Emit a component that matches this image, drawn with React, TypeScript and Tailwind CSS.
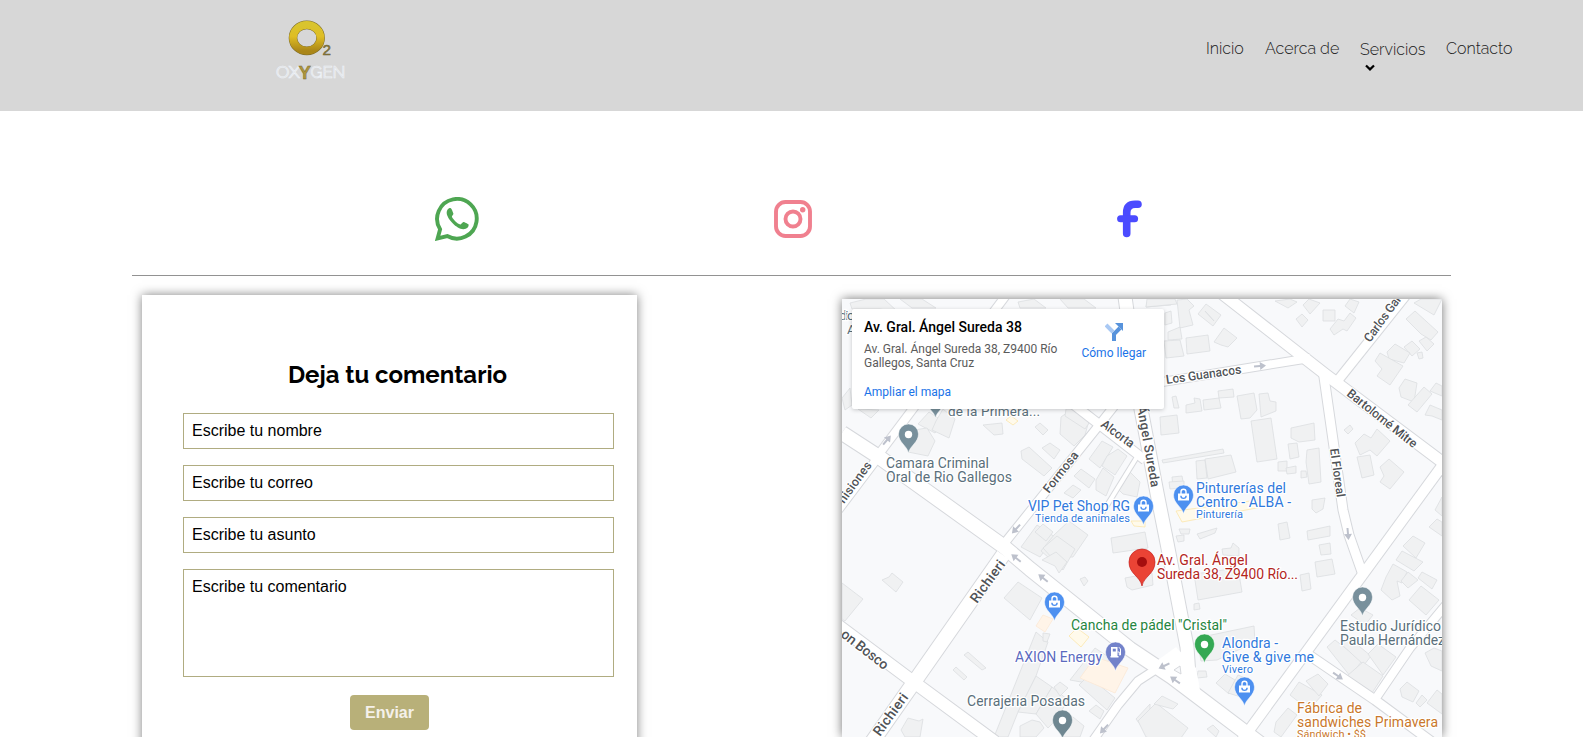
import React from "react";

const navFont = "font-['Raleway','Lato',sans-serif]";

const roads: [string, number][] = [
  ["M842 433L879 457L1003 546L1030 569L1130 649L1172 677L1262 745", 14],
  ["M870 745L917 678L1003 555", 14],
  ["M1003 545L1100 424L1130 386", 8],
  ["M1060 394L1145 460", 9],
  ["M1140 452L1098 520", 4],
  ["M1124 290L1141 409L1157 493L1167 543L1187 647L1190 690", 13],
  ["M1150 384L1310 358", 8],
  ["M1220 292L1325 374L1450 468", 11],
  ["M1410 290L1335 384", 9],
  ["M1323 370L1343 510L1349 535L1362 572", 9],
  ["M1450 455L1242 740", 10],
  ["M1306 653L1375 700L1432 742", 9],
  ["M1376 698L1410 648L1450 600", 8],
  ["M1158 668L1138 681L1118 705L1092 742", 8],
  ["M836 624L915 683L995 742", 12],
  ["M876 460L836 513", 8],
  ["M879 454L945 366", 8],
  ["M1010 290L980 330", 8],
];

const buildings = [
  // north-west edge
  "850,303 866,299 884,299 898,312 880,309 852,309", "900,299 912,308 936,308 922,299", "1018,302 1034,299 1046,308 1020,308", "1060,299 1084,299 1096,308 1068,308", "1148,299 1170,299 1171,305 1146,307",
  "842,398 850,388 852,405 845,410", "858,409 879,410 871,418", "918,424 929,412 944,422 935,433", "936,421 943,409 955,419 949,438 932,430",
  "914,430 927,428 935,441 928,456 908,452", "983,425 1002,423 1003,434 994,435", "1035,427 1040,423 1048,430 1043,435", "1061,417 1072,409 1090,417 1085,435 1074,446 1060,434",
  "1066,409 1076,409 1091,420 1085,429 1065,416", "1021,451 1029,447 1052,468 1044,476 1022,459", "1042,448 1050,443 1060,450 1054,459",
  "1089,459 1102,441 1113,447 1100,468", "1107,456 1118,449 1127,456 1115,475 1102,466", "1074,476 1081,469 1095,479 1089,488", "1096,480 1103,468 1114,477 1106,496 1096,490", "1116,487 1130,472 1140,482 1137,497 1123,494",
  "1064,493 1073,485 1081,490 1073,498", "1021,547 1037,525 1055,537 1040,557", "1035,532 1043,524 1053,532 1046,541", "1054,535 1069,521 1088,535 1073,557 1048,557 1041,551", "1043,548 1057,536 1075,549 1063,570",
  "1111,538 1145,532 1148,548 1113,553",
  // Los Guanacos
  "1147,299 1175,299 1177,304 1146,307", "1177,300 1187,299 1194,306 1189,310 1193,325 1180,328", "1198,314 1206,304 1221,315 1213,326", "1205,311 1214,321", "1165,313 1171,311 1172,323 1165,325", "1168,332 1180,327 1182,339 1168,340", "1164,341 1180,340 1184,356 1166,358",
  "1186,338 1208,335 1210,351 1187,354", "1214,342 1224,328 1237,338 1228,347 1221,345", "1172,397 1176,396 1179,408 1174,408", "1186,405 1195,403 1194,398 1200,399 1202,411 1186,413", "1203,400 1219,398 1221,408 1204,410", "1218,391 1233,389 1234,397 1219,398",
  "1237,396 1254,393 1257,410 1250,418 1241,419", "1259,394 1268,393 1270,401 1276,402 1276,411 1261,417", "1251,421 1271,418 1277,459 1257,462", "1160,417 1177,415 1179,433 1161,435",
  "1196,461 1205,460 1207,478 1197,479", "1205,459 1231,455 1236,472 1208,479", "1162,460 1223,449 1224,453 1163,463", "1291,428 1314,423 1315,440 1299,442 1291,438", "1288,444 1297,443 1299,457 1290,459", "1278,462 1287,461 1287,471 1278,471",
  "1307,450 1319,448 1321,482 1309,484 1306,462", "1301,471 1306,471 1307,477 1301,478", "1172,477 1182,476 1184,487 1173,488", "1169,482 1184,481 1184,488 1170,489", "1286,468 1296,466 1296,473 1287,474",
  "1357,457 1370,455 1374,475 1362,478", "1312,500 1325,498 1323,509 1316,513 1312,509", "1278,524 1287,522 1290,538 1280,540", "1307,531 1330,526 1330,536 1308,540", "1197,534 1217,528 1215,533 1200,539", "1179,529 1190,529 1189,534 1181,534", "1176,536 1184,535 1184,541 1178,542",
  "1315,562 1332,559 1335,574 1317,577", "1319,545 1330,543 1331,554 1321,555", "1300,575 1309,573 1311,589 1302,591", "1194,574 1238,568 1242,592 1198,600", "1222,549 1231,548 1233,543 1239,548 1239,556 1223,555", "1125,578 1152,573 1153,585 1132,590 1127,587", "1194,604 1199,603 1200,609 1194,610",
  // north-east
  "1275,301 1290,299 1297,302 1288,308", "1303,305 1309,299 1320,303 1310,314", "1296,319 1302,314 1308,320 1302,327", "1323,310 1335,310 1335,321 1323,321", "1330,329 1338,319 1344,321 1350,313 1356,318 1347,331 1343,329 1334,335", "1345,306 1350,299 1359,302 1354,313",
  "1406,319 1415,311 1438,332 1431,340 1421,334", "1404,347 1412,341 1420,349 1412,356", "1387,352 1395,344 1410,353 1404,363 1389,359", "1375,361 1380,353 1403,366 1390,385 1377,376 1382,369", "1419,341 1426,337 1434,344 1427,351", "1417,353 1422,352 1423,358 1419,359", "1414,303 1421,299 1442,299 1434,315",
  "1399,388 1405,379 1417,383 1414,402 1401,397", "1408,405 1424,387 1432,394 1417,412", "1430,391 1436,383 1442,386 1442,396", "1425,415 1430,405 1442,410 1442,420 1432,416", "1344,430 1350,425 1353,429 1348,434", "1355,443 1364,434 1371,438 1377,429 1390,441 1377,456 1370,450 1360,455",
  "1380,467 1389,459 1404,472 1390,489 1380,482 1384,476",
  // south-east
  "1435,510 1442,497 1442,516", "1429,527 1437,519 1442,522 1442,536", "1403,546 1413,536 1425,543 1416,558", "1396,560 1402,551 1423,562 1414,571", "1386,577 1393,564 1407,572 1402,583 1397,581 1400,596 1392,600 1381,590", "1401,581 1408,572 1418,580 1408,588", "1418,578 1422,572 1437,580 1432,589", "1409,600 1421,586 1439,600 1426,615", "1351,615 1360,608 1373,615 1365,625",
  "1327,647 1335,640 1362,661 1350,676", "1340,643 1348,637 1371,656 1364,665", "1347,676 1363,662 1383,676 1372,693", "1368,654 1378,644 1396,657 1383,675", "1400,689 1407,682 1419,691 1413,702 1402,697", "1416,703 1422,695 1427,700 1420,707", "1427,703 1437,690 1442,694 1442,714", "1425,653 1434,648 1442,651 1442,671 1431,666",
  "1290,695 1299,682 1322,695 1309,710", "1306,681 1318,674 1328,684 1319,696", "1276,722 1288,708 1297,715 1281,737 1274,732",
  // south
  "842,583 863,599 845,621 842,619", "882,580 889,577 892,573 903,582 896,592", "1004,598 1018,582 1042,598 1030,620", "964,655 968,652 986,668 982,670", "953,670 956,667 967,677 964,680", "994,737 1036,632 1048,642 1036,676 1018,712 1008,737", "1018,712 1036,676 1052,687 1036,714", "1036,714 1052,687 1068,700 1056,720 1048,728",
  "901,730 908,718 919,721 923,719 920,737 905,737", "1043,633 1050,634 1047,642 1043,641", "1070,680 1095,648 1110,658 1092,684", "1079,685 1088,676 1115,698 1107,710", "1054,687 1060,682 1068,688 1060,696", "1089,711 1096,705 1104,711 1100,719", "1020,726 1032,720 1040,722 1044,728 1036,737 1020,737", "1055,722 1073,717 1084,726 1080,737 1063,737", "1136,719 1150,704 1150,737", "1138,721 1156,703 1188,728 1176,745 1146,737",
  "1154,704 1162,696 1178,704 1173,709", "1197,638 1254,626 1255,642 1217,660 1201,661", "1216,683 1225,674 1235,680 1229,694", "1228,693 1238,675 1252,681 1254,690 1241,697", "1198,671 1206,671 1207,677 1197,678", "1207,729 1213,725 1219,731 1216,737", "1080,579 1085,577 1088,581 1084,586", "1042,560 1055,566 1059,573 1067,562 1056,552",
];

const yellowShapes = ["1006,420 1011,416 1018,421 1013,425", "1131,521 1145,521 1145,527 1134,526", "1069,636 1077,628 1089,637 1081,647", "1176,511 1258,500 1262,507 1182,522"];
const orangeShapes = ["1036,626 1043,615 1053,619 1045,632", "1080,678 1095,657 1128,668 1115,693"];

type LabelProps = { x: number; y: number; w: number; s?: number; c?: string; r?: number; children: React.ReactNode };

function Label({ x, y, w, s = 14, c = "#5a6f7b", r = 0, children }: LabelProps) {
  return (
    <text x={x} y={y} textLength={w} fontSize={s} fill={c} fontWeight={c === street ? 500 : 400} transform={r ? `rotate(${r} ${x} ${y})` : undefined} stroke="#fff" strokeWidth="2.5" strokeLinejoin="round" paintOrder="stroke">
      {children}
    </text>
  );
}

function Pin({ x, y, c, kind = "dot" }: { x: number; y: number; c: string; kind?: "dot" | "bag" | "fuel" }) {
  return (
    <g transform={`translate(${x} ${y})`}>
      <path d="M0 0C-1.2-7-10-10.5-10-19A10 10 0 1 1 10-19C10-10.5 1.2-7 0 0Z" fill={c} stroke="#fff" strokeWidth=".5" />
      {kind === "dot" && <circle cy="-18.5" r="3.7" fill="#fff" />}
      {kind === "bag" && (
        <g fill="none" stroke="#fff" strokeWidth="1.4">
          <path d="M-2.5-20V-22.3A2.5 2.5 0 0 1 2.5-22.3V-20" />
          <path d="M-5.5-20.5H5.5V-13.5H-5.5Z" fill="#fff" stroke="none" />
          <path d="M-2.6-18.2A2.6 2.6 0 0 0 2.6-18.2" stroke={c} />
        </g>
      )}
      {kind === "fuel" && (
        <g>
          <path d="M-4.5-24H2V-15H3V-13.5H-5V-15H-4.5Z" fill="#fff" />
          <path d="M-2.7-22.3H.3V-19.5H-2.7Z" fill={c} />
          <path d="M2-19H3.8V-16H5V-22L3.4-23.8" fill="none" stroke="#fff" />
        </g>
      )}
    </g>
  );
}

function Arrow({ x, y, r }: { x: number; y: number; r: number }) {
  return <path transform={`translate(${x} ${y}) rotate(${r})`} d="M-6-1H0V-4L6 0L0 4V1H-6Z" fill="#bdc1cc" />;
}

const street = "#505357";
const blue = "#3079dd";

function CityMap() {
  return (
    <svg viewBox="842 299 600 438" className="block h-[438px] w-[600px] font-[Roboto,sans-serif]">
      <rect x="842" y="299" width="600" height="438" fill="#f8f9fb" />
      <g fill="#f0f1f2" stroke="#dcdee1" strokeWidth=".8">
        {buildings.map((p) => <polygon key={p} points={p} />)}
      </g>
      <g fill="#fffaeb" stroke="#fbe6ab" strokeWidth=".8">
        {yellowShapes.map((p) => <polygon key={p} points={p} />)}
      </g>
      <g fill="#fff4e8" stroke="#fbe9d6" strokeWidth=".8">
        {orangeShapes.map((p) => <polygon key={p} points={p} />)}
      </g>
      <g fill="none" strokeLinejoin="round">
        {roads.map(([d, w]) => <path key={d} d={d} stroke="#d6d8dc" strokeWidth={w + 2} />)}
        {roads.map(([d, w]) => <path key={d} d={d} stroke="#fff" strokeWidth={w} />)}
      </g>
      <path d="M1158 660L1176 647L1196 668L1200 690L1177 684Z" fill="#fff" />
      <path d="M1174 670L1180 666L1181 674Z" fill="#f8f9fb" stroke="#d6d8dc" />
      <Arrow x={887} y={440} r={-50} />
      <Arrow x={1016} y={529} r={133} />
      <Arrow x={1016} y={558} r={218} />
      <Arrow x={1043} y={578} r={218} />
      <Arrow x={1260} y={366} r={-5} />
      <Arrow x={1348} y={534} r={85} />
      <Arrow x={1164} y={666} r={155} />
      <Arrow x={1175} y={680} r={215} />
      <Arrow x={1338} y={676} r={35} />
      <Arrow x={1104} y={729} r={133} />

      <Label x={839} y={320} w={15} s={13.5}>dic</Label>
      <Label x={847} y={334} w={9} s={13.5}>A</Label>
      <Label x={844} y={504} w={48} s={12.5} c={street} r={-54}>nisiones</Label>
      <Label x={1049} y={494} w={49} s={12.5} c={street} r={-52}>Formosa</Label>
      <Label x={1100} y={426} w={38} s={12.5} c={street} r={36}>Alcorta</Label>
      <Label x={1137} y={407} w={82} s={13} c={street} r={80}>Ángel Sureda</Label>
      <Label x={1166.5} y={384} w={76} s={12.5} c={street} r={-8}>Los Guanacos</Label>
      <Label x={1370} y={343} w={61} s={12.5} c={street} r={-54}>Carlos Gard</Label>
      <Label x={1346} y={395} w={86} s={12.5} c={street} r={38.5}>Bartolomé Mitre</Label>
      <Label x={1330} y={449} w={49} s={12} c={street} r={82}>El Floreal</Label>
      <Label x={977} y={604} w={49} s={14} c={street} r={-54}>Richieri</Label>
      <Label x={880} y={737} w={49} s={14} c={street} r={-54}>Richieri</Label>
      <Label x={840} y={636} w={56} s={14} c={street} r={38}>on Bosco</Label>

      <Pin x={935.5} y={418} c="#78909c" />
      <Label x={948} y={416} w={92} s={13.5}>de la Primera...</Label>
      <Pin x={908.5} y={453} c="#78909c" />
      <Label x={886} y={468} w={103}>Camara Criminal</Label>
      <Label x={886} y={482} w={126}>Oral de Rio Gallegos</Label>

      <Label x={1028} y={511} w={102} c={blue}>VIP Pet Shop RG</Label>
      <Label x={1035} y={522} w={95} s={11} c={blue}>Tienda de animales</Label>
      <Pin x={1143.5} y={525} c="#4d90f0" kind="bag" />
      <Pin x={1183.5} y={514} c="#4d90f0" kind="bag" />
      <Label x={1196} y={493} w={90} c={blue}>Pinturerías del</Label>
      <Label x={1196} y={507} w={95} c={blue}>Centro - ALBA -</Label>
      <Label x={1196} y={518} w={47} s={11} c={blue}>Pinturería</Label>

      <path d="M1142 586C1140 576 1129 574 1129 562A13 13 0 0 1 1155 562C1155 574 1144 576 1142 586Z" fill="#ea4335" stroke="#c5221f" strokeWidth=".7" />
      <circle cx="1142" cy="562" r="5" fill="#a50e0e" />
      <Label x={1157} y={565} w={91} c="#b3261e">Av. Gral. Ángel</Label>
      <Label x={1157} y={579} w={141} c="#b3261e">Sureda 38, Z9400 Río...</Label>

      <Pin x={1054.5} y={621} c="#4d90f0" kind="bag" />
      <Label x={1071} y={630} w={156} c="#25853f">Cancha de pádel "Cristal"</Label>
      <Pin x={1204.5} y={663} c="#34a853" />
      <Label x={1222} y={648} w={56} c={blue}>Alondra -</Label>
      <Label x={1222} y={662} w={92} c={blue}>Give &amp; give me</Label>
      <Label x={1222} y={673} w={31} s={11} c={blue}>Vivero</Label>
      <Pin x={1244.5} y={706} c="#4d90f0" kind="bag" />
      <Label x={1015} y={662} w={87} c="#5b6abf">AXION Energy</Label>
      <Pin x={1115.5} y={671} c="#7382ca" kind="fuel" />
      <Label x={967} y={706} w={118}>Cerrajeria Posadas</Label>
      <Pin x={1062.5} y={739} c="#6f8791" />
      <Pin x={1362.5} y={616} c="#78909c" />
      <Label x={1340} y={631} w={101}>Estudio Jurídico</Label>
      <Label x={1340} y={645} w={105}>Paula Hernández</Label>
      <Label x={1297} y={713} w={65} c="#c9772b">Fábrica de</Label>
      <Label x={1297} y={727} w={141} c="#c9772b">sandwiches Primavera</Label>
      <Label x={1297} y={738} w={69} s={11} c="#c9772b">Sándwich • $$</Label>
    </svg>
  );
}

function Logo() {
  return (
    <svg viewBox="270 15 80 70" className="h-[70px] w-20 shrink-0">
      <defs>
        <linearGradient id="gold" x1="0" y1="0" x2="0" y2="1">
          <stop offset="0" stopColor="#d9c42e" />
          <stop offset=".45" stopColor="#dfbd24" />
          <stop offset="1" stopColor="#aa8618" />
        </linearGradient>
      </defs>
      <ellipse cx="306.8" cy="37.9" rx="13.8" ry="13" fill="none" stroke="#7d6d2b" strokeWidth="8.6" />
      <ellipse cx="306.8" cy="37.9" rx="13.8" ry="13" fill="none" stroke="url(#gold)" strokeWidth="7.6" />
      <text x="322.5" y="54.5" textLength="8.5" lengthAdjust="spacingAndGlyphs" className="font-['Liberation_Sans',sans-serif] text-[14px]" fill="#92823e" stroke="#6c6030" strokeWidth=".5">2</text>
      <g className="font-['Raleway','Lato',sans-serif] text-[17px]" fill="#d7d7d7" stroke="#eef2f7" strokeWidth=".7">
        <text x="276" y="78" textLength="24" lengthAdjust="spacingAndGlyphs">OX</text>
        <text x="310.5" y="78" textLength="35" lengthAdjust="spacingAndGlyphs">GEN</text>
      </g>
      <text x="298.5" y="78.5" textLength="12.5" lengthAdjust="spacingAndGlyphs" className="font-['Liberation_Sans',sans-serif] text-[18px] font-bold" fill="#ad963b" stroke="#72642f" strokeWidth=".4">Y</text>
    </svg>
  );
}

const field = "block h-9 w-[431px] border border-[#b0ac81] bg-white px-2 text-base text-black placeholder:text-black outline-none font-['Liberation_Sans',Arial,sans-serif]";

export default function App() {
  return (
    <div className="h-[737px] w-[1583px] overflow-hidden bg-white">
      <header className="flex h-[111px] items-start justify-between bg-[#d7d7d7] pl-[270px] pr-[69px] pt-[15px]">
        <Logo />
        <nav className={`flex gap-5 pt-[22px] text-base leading-6 font-light text-[#222] ${navFont}`}>
          <a className="w-[39px] whitespace-nowrap">Inicio</a>
          <a className="w-[75px] whitespace-nowrap">Acerca de</a>
          <a className="w-[66px] whitespace-nowrap pt-px">
            Servicios
            <svg viewBox="0 0 10 8" className="ml-[5px] mt-[2px] block h-2 w-[10px]" fill="none" stroke="#000" strokeWidth="2.2"><path d="M1 1.5L5 5.4L9 1.5" /></svg>
          </a>
          <a className="w-[68px] whitespace-nowrap">Contacto</a>
        </nav>
      </header>

      <main className="mx-auto w-[1319px]">
        <section className="flex h-[165px] items-start border-b border-[#929292] pl-[302.5px] pt-[86px]">
          <svg viewBox="0 0 44 44" className="h-11 w-11" fill="none" stroke="#4ea652" strokeWidth="3.9">
            <path d="M2.6 41.4L5.1 32.2A19.8 19.8 0 1 1 12.2 39Z" />
            <path d="M15.7 11.2C14.3 10.7 11.5 12.7 11.7 16.2C12.2 22 21.7 32 28.2 32.2C31.8 32.3 34 29.7 33.6 27.5C33.3 26.8 29.2 25 28.5 24.9C27.6 24.7 26 27.8 25.2 27.6C22.5 26.8 18.2 22.8 16.9 19.8C16.6 19 18.8 17.6 18.4 16.5C18 15.3 16.7 11.4 15.7 11.2Z" fill="#4ea652" stroke="none" />
          </svg>
          <svg viewBox="0 0 38 38" className="ml-[295px] mt-[3px] h-[38px] w-[38px]" fill="none" stroke="#f0808f" strokeWidth="3.9">
            <rect x="2" y="2" width="34" height="34" rx="9.5" />
            <circle cx="19" cy="19" r="7.5" />
            <circle cx="28.7" cy="9.8" r="2.7" fill="#f0808f" stroke="none" />
          </svg>
          <svg viewBox="0 0 25 38" className="ml-[305px] mt-[3px] h-[38px] w-[25px]" fill="none" stroke="#4b4bff" strokeWidth="7" strokeLinecap="round" strokeLinejoin="round">
            <path d="M21 4.3H18Q9.7 4.5 9.7 12.5V33.5" strokeWidth="7.6" />
            <path d="M3.6 18.7H17.6" />
          </svg>
        </section>

        <section className="flex items-start justify-between pl-[10px] pr-[9px] pt-[19px]">
          <form className="flex h-[500px] w-[495px] flex-col items-start gap-4 bg-white pl-[41px] shadow-[0_0_10px_rgba(0,0,0,0.5)]" onSubmit={(e) => e.preventDefault()}>
            <h2 className={`mt-[60px] h-[42px] w-[429px] pt-[2px] text-center text-2xl leading-9 font-bold text-black ${navFont}`}>Deja tu comentario</h2>
            <input className={field} placeholder="Escribe tu nombre" />
            <input className={field} placeholder="Escribe tu correo" />
            <input className={field} placeholder="Escribe tu asunto" />
            <textarea className={`${field} h-[108px]! resize-none pt-[5px]`} placeholder="Escribe tu comentario" />
            <button className="ml-[167px] mt-0.5 h-[35px] w-[79px] rounded bg-[#b8b079] font-['Liberation_Sans',Arial,sans-serif] text-base font-bold text-[#f5f1ea]">Enviar</button>
          </form>

          <div className="relative mt-1 w-[600px] shadow-[0_0_10px_rgba(0,0,0,0.55)]">
            <CityMap />
            <aside className="absolute left-[10px] top-[10px] flex h-[100px] w-[312px] justify-between rounded-[2px] bg-white pb-2 pt-[9px] pl-3 pr-[18px] font-[Roboto,sans-serif] text-xs text-[#5b5b5b] shadow-[0_1px_4px_rgba(0,0,0,0.2)]">
              <div className="flex flex-col items-start whitespace-nowrap">
                <strong className="text-sm leading-[18px] font-medium text-black">Av. Gral. Ángel Sureda 38</strong>
                <p className="mt-[6px] leading-[14px]">Av. Gral. Ángel Sureda 38, Z9400 Río<br />Gallegos, Santa Cruz</p>
                <a className="mt-[15px] leading-[14px] text-[#1a73e8]">Ampliar el mapa</a>
              </div>
              <div className="flex flex-col items-center pt-[5px] text-[#1a73e8]">
                <svg viewBox="0 0 18 18" className="h-[18px] w-[18px]" fill="none" stroke="#5793dc" strokeWidth="4">
                  <path d="M1 2L8 9" stroke="#a9c9f4" />
                  <path d="M9 18V11L15 5" />
                  <path d="M10 0H18V8Z" fill="#5793dc" stroke="none" />
                </svg>
                <span className="mt-[5px] whitespace-nowrap leading-[14px]">Cómo llegar</span>
              </div>
            </aside>
          </div>
        </section>
      </main>
    </div>
  );
}
